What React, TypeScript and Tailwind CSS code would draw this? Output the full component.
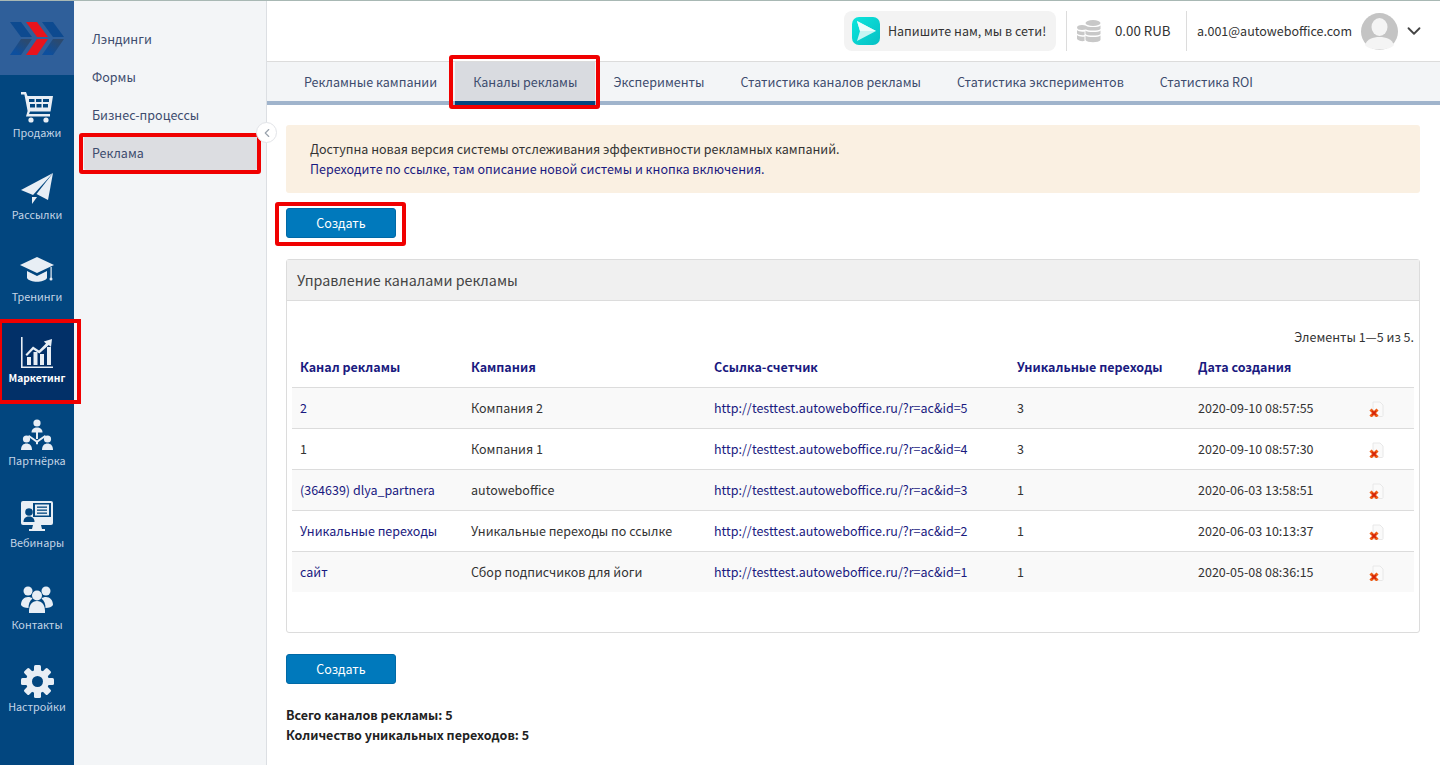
import React from 'react'
import { ChevronLeft, ChevronDown } from 'lucide-react'

const font = "font-['Noto_Sans_CJK_SC','Noto_Sans',sans-serif]"

const CartIcon = () => (
  <svg width="34" height="32" viewBox="0 0 34 32" fill="currentColor">
    <path d="M1 1h5l1.500 4H33l-2.500 15.500H10L9 23h21v2.500H6l1.600-5.500L4.400 3.600H1z" />
    <g fill="#02467f">
      <rect x="9" y="8" width="5.500" height="3" />
      <rect x="16" y="8" width="5.500" height="3" />
      <rect x="23" y="8" width="6" height="3" />
      <rect x="10" y="13" width="5" height="3.500" />
      <rect x="16.500" y="13" width="5" height="3.500" />
      <rect x="23" y="13" width="5" height="3.500" />
    </g>
    <circle cx="11" cy="29" r="2.600" />
    <circle cx="26" cy="29" r="2.600" />
  </svg>
)

const PlaneIcon = () => (
  <svg width="32" height="32" viewBox="0 0 32 32" fill="currentColor">
    <path d="M0 17L32 0 12 22z" />
    <path d="M32 0L27 27 15.500 21z" />
    <path d="M11 24l5 0-5 7z" />
  </svg>
)

const CapIcon = () => (
  <svg width="34" height="28" viewBox="0 0 34 28" fill="currentColor">
    <path d="M17 0l17 8-17 8L0 8z" />
    <path d="M7 14l10 5 10-5v7c-3 5-17 5-20 0z" />
    <rect x="30.500" y="10" width="1.200" height="11" />
    <circle cx="31" cy="22" r="1.500" />
  </svg>
)

const ChartIcon = () => (
  <svg width="34" height="32" viewBox="0 0 34 32" fill="currentColor">
    <path d="M1 0h1.600v29.500H33V31H1z" />
    <rect x="7" y="20" width="4" height="8" />
    <rect x="13.500" y="15" width="4" height="13" />
    <rect x="20" y="17" width="4" height="11" />
    <rect x="27" y="10" width="4" height="18" />
    <path d="M5.500 17.500L13 9.500l6 4 7-7-2.200-2L32 2l-1 8-2.200-2-9.500 8.500-6-4-6.300 6.500z" />
  </svg>
)

const PartnerIcon = () => (
  <svg width="34" height="32" viewBox="0 0 34 32" fill="currentColor">
    <circle cx="17" cy="4" r="3.600" />
    <path d="M11.500 13.500c0-3.500 2.500-5 5.500-5s5.500 1.500 5.500 5z" />
    <rect x="16" y="13" width="2" height="7" />
    <path d="M9 16l8 5.500 8-5.500 1 1.500-8 5.700v2h-2v-2l-8-5.700z" />
    <circle cx="6.500" cy="20" r="3.600" />
    <path d="M1 31c0-4.500 2.500-6.500 5.500-6.500S12 26.500 12 31z" />
    <circle cx="27.500" cy="20" r="3.600" />
    <path d="M22 31c0-4.500 2.500-6.500 5.500-6.500S33 26.500 33 31z" />
  </svg>
)

const WebinarIcon = () => (
  <svg width="34" height="32" viewBox="0 0 34 32" fill="currentColor">
    <path d="M3 0h28a2 2 0 0 1 2 2v20a2 2 0 0 1-2 2H3a2 2 0 0 1-2-2V2a2 2 0 0 1 2-2z" />
    <rect x="13" y="2" width="18" height="14" fill="#02467f" />
    <rect x="15" y="3.500" width="14" height="11" />
    <g fill="#02467f">
      <rect x="17" y="5.500" width="10" height="1.300" />
      <rect x="17" y="8.500" width="10" height="1.300" />
      <rect x="17" y="11.500" width="10" height="1.300" />
    </g>
    <circle cx="9" cy="11" r="3.800" fill="#02467f" />
    <path d="M3.500 21c0-4 2.500-5.500 5.500-5.500s5.500 1.500 5.500 5.500z" fill="#02467f" />
    <path d="M13 24h8l1 4h3v2H9v-2h3z" />
  </svg>
)

const UsersIcon = () => (
  <svg width="32" height="27" viewBox="0 0 32 27" fill="currentColor">
    <circle cx="7" cy="5" r="4.500" />
    <circle cx="25" cy="5" r="4.500" />
    <path d="M0 19c0-5 3-8 7-8 2 0 3.500.5 4.500 1.500C8.500 15 7.500 18 7.500 22 4 22 1 21 0 19z" />
    <path d="M32 19c0-5-3-8-7-8-2 0-3.500.5-4.500 1.500 3 2.500 4 5.500 4 9.500 3.500 0 6.500-1 7.500-3z" />
    <circle cx="16" cy="9.500" r="5" />
    <path d="M8 27c-.5-8 3-12 8-12s8.500 4 8 12z" />
  </svg>
)

const GearIcon = () => (
  <svg width="33" height="33" viewBox="0 0 33 33" fill="currentColor">
    {[0, 45, 90, 135, 180, 225, 270, 315].map((a) => (
      <rect key={a} x="13" y="0" width="7" height="8" rx="1.500" transform={`rotate(${a} 16.500 16.500)`} />
    ))}
    <circle cx="16.500" cy="16.500" r="11.500" />
    <circle cx="16.500" cy="16.500" r="5.500" fill="#02467f" />
  </svg>
)

const navItems = [
  { label: 'Продажи', icon: <CartIcon /> },
  { label: 'Рассылки', icon: <PlaneIcon /> },
  { label: 'Тренинги', icon: <CapIcon /> },
  { label: 'Маркетинг', icon: <ChartIcon />, active: true },
  { label: 'Партнёрка', icon: <PartnerIcon /> },
  { label: 'Вебинары', icon: <WebinarIcon /> },
  { label: 'Контакты', icon: <UsersIcon /> },
  { label: 'Настройки', icon: <GearIcon /> },
]

const menuItems = ['Лэндинги', 'Формы', 'Бизнес-процессы', 'Реклама']

const tabs = ['Рекламные кампании', 'Каналы рекламы', 'Эксперименты', 'Статистика каналов рекламы', 'Статистика экспериментов', 'Статистика ROI']

const rows = [
  { channel: '2', link: true, company: 'Компания 2', id: 5, uniq: 3, date: '2020-09-10 08:57:55' },
  { channel: '1', link: false, company: 'Компания 1', id: 4, uniq: 3, date: '2020-09-10 08:57:30' },
  { channel: '(364639) dlya_partnera', link: true, company: 'autoweboffice', id: 3, uniq: 1, date: '2020-06-03 13:58:51' },
  { channel: 'Уникальные переходы', link: true, company: 'Уникальные переходы по ссылке', id: 2, uniq: 1, date: '2020-06-03 10:13:37' },
  { channel: 'сайт', link: true, company: 'Сбор подписчиков для йоги', id: 1, uniq: 1, date: '2020-05-08 08:36:15' },
]

const Logo = () => (
  <svg width="54" height="33" viewBox="0 0 54 33">
    <defs>
      <linearGradient id="logoLeft" x1="1" y1="0" x2="0" y2="1">
        <stop offset="0.2" stopColor="#2b4a70" />
        <stop offset="0.8" stopColor="#0d4f9e" />
      </linearGradient>
    </defs>
    <path d="M0 0h11l11 15H11z" fill="#0d4a90" />
    <path d="M11 17h11L11 33H0z" fill="url(#logoLeft)" />
    <path d="M32 0h11l11 15H43z" fill="#0d4a90" />
    <path d="M43 17h11L43 33H32z" fill="url(#logoLeft)" />
    <path d="M16 0h11l11 15H27z" fill="#e8141c" />
    <path d="M27 17h11L27 33H16z" fill="#e8141c" />
  </svg>
)

const ChatIcon = () => (
  <svg width="28" height="28" viewBox="0 0 28 28">
    <defs>
      <linearGradient id="chatBg" x1="0" y1="0" x2="1" y2="1">
        <stop offset="0" stopColor="#0ce6dc" />
        <stop offset="1" stopColor="#06bfc4" />
      </linearGradient>
    </defs>
    <rect width="28" height="28" rx="7" fill="url(#chatBg)" />
    <path d="M5 4l19 10L5 24l3-10z" fill="#c6f5f3" />
    <path d="M5 4l19 10H8z" fill="#ecfcfb" />
  </svg>
)

const CoinsIcon = () => (
  <svg width="24" height="23" viewBox="0 0 24 23" fill="#c8c8c8">
    <ellipse cx="16" cy="3" rx="7.500" ry="3" />
    <path d="M8.500 5.500c1.500 2 13.500 2 15 0V9c-1.500 2-13.500 2-15 0zM8.500 10.500c1.500 2 13.500 2 15 0V14c-1.500 2-13.500 2-15 0zM8.500 15.500c1.500 2 13.500 2 15 0V20c-1.500 3-13.500 3-15 0z" />
    <ellipse cx="5" cy="7.500" rx="5" ry="2.500" />
    <path d="M0 10c1 1.500 5 2 7.500 1.500V15C5 15.500 1 15 0 13.500zM0 15c1 1.500 5 2 7.500 1.500V21C4 21.500 1 20.500 0 19z" />
  </svg>
)

const Avatar = () => (
  <svg width="37" height="37" viewBox="0 0 37 37" className="ml-[9px]">
    <circle cx="18.500" cy="18.500" r="18.500" fill="#c4c4c4" />
    <ellipse cx="18.500" cy="14" rx="8" ry="9" fill="#f4f4f4" />
    <path d="M4 32c2-6 8-8 14.500-8S31 26 33 32c-4 6-25 6-29 0z" fill="#f4f4f4" />
  </svg>
)

const DeleteIcon = () => (
  <svg width="16" height="16" viewBox="0 0 16 16">
    <path d="M4 1h7l3 3v10.500a1 1 0 0 1-1 1H5a1 1 0 0 1-1-1z" fill="#fafafa" stroke="#e8e8e8" />
    <path d="M1.500 8.500l7 7M8.500 8.500l-7 7" stroke="#ee5a12" strokeWidth="3" />
    <path d="M3 10l4 4M7 10l-4 4" stroke="#d4220c" strokeWidth="1.500" />
  </svg>
)

const CreateButton = () => (
  <button className="w-[110px] h-[30px] bg-[#0079bc] border border-[#0069a6] rounded-[3px] text-white text-[12.500px]">Создать</button>
)

export default function App() {
  return (
    <div className={`${font} h-[765px] flex overflow-hidden bg-white border-t border-[#a8b8b4] text-[12.500px] text-[#333]`}>
      <aside className="w-[74px] shrink-0 bg-[#02467f] text-[#e8eef5]">
        <div className="h-[74px] bg-[#2f5f9a] flex items-center justify-center">
          <Logo />
        </div>
        {navItems.map((item) => (
          <div key={item.label} className={`relative h-[82px] flex flex-col items-center pt-[16px] ${item.active ? 'bg-[#023068]' : ''}`}>
            <div className="h-[32px] flex items-center justify-center">{item.icon}</div>
            <span className={`leading-[18px] ${item.active ? 'text-white font-bold text-[10.200px]' : 'text-[10.800px] text-[#c5d5e6]'}`}>{item.label}</span>
            {item.active && <div className="absolute -top-[2px] -left-[2px] w-[83px] h-[85px] border-[4px] border-[#f00000] z-10" />}
          </div>
        ))}
      </aside>

      <nav className="relative w-[193px] shrink-0 bg-[#f3f5f7] border-r border-[#dcdfe3] pt-[21px] pl-[10px] text-[#3d4c6e]">
        {menuItems.map((item) => (
          <div key={item} className={`relative h-[34px] mb-[4px] pl-[8px] flex items-center w-[173px] ${item === 'Реклама' ? 'bg-[#dcdde1] rounded-[2px]' : ''}`}>
            {item}
            {item === 'Реклама' && <div className="absolute -left-[5px] -right-[4px] -top-[3px] -bottom-[4px] border-[4px] border-[#f00000] rounded-[3px]" />}
          </div>
        ))}
        <div className="absolute -right-[11px] top-[121px] w-[21px] h-[21px] bg-white border border-[#e2e4e8] rounded-full flex items-center justify-center z-10 text-[#9aa3ad]">
          <ChevronLeft size={14} />
        </div>
      </nav>

      <main className="flex-1 min-w-0">
        <header className="h-[61px] border-b border-[#dcdcdc] flex items-center justify-end">
          <div className="h-[40px] w-[212px] bg-[#f3f3f3] rounded-[8px] flex items-center pl-[8px] gap-[8px] mr-[10px] whitespace-nowrap">
            <ChatIcon />
            Напишите нам, мы в сети!
          </div>
          <div className="h-[40px] w-[120px] border-l border-[#dcdcdc] flex items-center pl-[10px] gap-[14px]">
            <CoinsIcon />
            <span className="text-[13.300px]">0.00 RUB</span>
          </div>
          <div className="h-[40px] border-l border-[#dcdcdc] flex items-center pl-[10px] pr-[15px]">
            a.001@autoweboffice.com
            <Avatar />
            <ChevronDown size={22} strokeWidth={2} className="ml-[5px] text-[#444]" />
          </div>
        </header>

        <div className="h-[43px] bg-[#f3f5f7] border-b-[4px] border-[#a0b4cc] flex items-start pl-[19px] text-[#3d4c6e] text-[12.540px]">
          {tabs.map((tab) => (
            <div key={tab} className={`relative px-[18px] pt-[1px] flex items-center ${tab === 'Каналы рекламы' ? 'h-[43px] bg-[#d9dbe0] border-b-[4px] border-[#02467f]' : 'h-[39px]'}`}>
              {tab}
              {tab === 'Каналы рекламы' && <div className="absolute -top-[7px] -left-[6px] -right-[5px] -bottom-[8px] border-[4px] border-[#f00000] rounded-[3px]" />}
            </div>
          ))}
        </div>

        <div className="pl-[19px] pr-[20px] pt-[20px]">
          <div className="h-[68px] bg-[#faf0e2] rounded-[3px] pl-[24px] pt-[14px] leading-[20px]">
            <div>Доступна новая версия системы отслеживания эффективности рекламных кампаний.</div>
            <div className="text-[#1a1a80]">Переходите по ссылке, там описание новой системы и кнопка включения.</div>
          </div>

          <div className="relative w-[110px] h-[30px] mt-[15px]">
            <CreateButton />
            <div className="absolute -left-[11px] -right-[10px] -top-[6px] -bottom-[8px] border-[4px] border-[#f00000] rounded-[3px]" />
          </div>

          <section className="mt-[21px] h-[374px] border border-[#dcdcdc] rounded-[3px]">
            <div className="h-[41px] bg-[#f0f0f0] border-b border-[#dcdcdc] pl-[10px] flex items-center text-[14.300px] text-[#444]">
              Управление каналами рекламы
            </div>
            <div className="px-[5px] pt-[27px]">
              <div className="text-right leading-[18px] mb-[1px]">Элементы 1—5 из 5.</div>
              <table className="w-full table-fixed border-collapse">
                <thead>
                  <tr className="h-[40px] text-left text-[#1a1a80]">
                    <th className="w-[171px] pl-[8px] pt-[2px] font-bold">Канал рекламы</th>
                    <th className="w-[243px] pl-[8px] pt-[2px] font-bold">Кампания</th>
                    <th className="w-[303px] pl-[8px] pt-[2px] font-bold">Ссылка-счетчик</th>
                    <th className="w-[181px] pl-[8px] pt-[2px] font-bold">Уникальные переходы</th>
                    <th className="w-[170px] pl-[8px] pt-[2px] font-bold">Дата создания</th>
                    <th />
                  </tr>
                </thead>
                <tbody>
                  {rows.map((row, i) => (
                    <tr key={row.id} className={`h-[41px] border-t border-[#dcdcdc] ${i % 2 === 0 ? 'bg-[#f9f9f9]' : ''}`}>
                      <td className={`pl-[8px] pt-[2px] ${row.link ? 'text-[#1a1a80]' : ''}`}>{row.channel}</td>
                      <td className="pl-[8px] pt-[2px]">{row.company}</td>
                      <td className="pl-[8px] pt-[2px] text-[#1a1a80]">{`http://testtest.autoweboffice.ru/?r=ac&id=${row.id}`}</td>
                      <td className="pl-[8px] pt-[2px]">{row.uniq}</td>
                      <td className="pl-[8px] pt-[2px]">{row.date}</td>
                      <td className="pl-[9px]"><div className="pt-[3px]"><DeleteIcon /></div></td>
                    </tr>
                  ))}
                </tbody>
              </table>
            </div>
          </section>

          <div className="mt-[21px]">
            <CreateButton />
          </div>
          <div className="mt-[21px] leading-[20px] font-bold text-[#222]">
            <div>Всего каналов рекламы: 5</div>
            <div>Количество уникальных переходов: 5</div>
          </div>
        </div>
      </main>
    </div>
  )
}
